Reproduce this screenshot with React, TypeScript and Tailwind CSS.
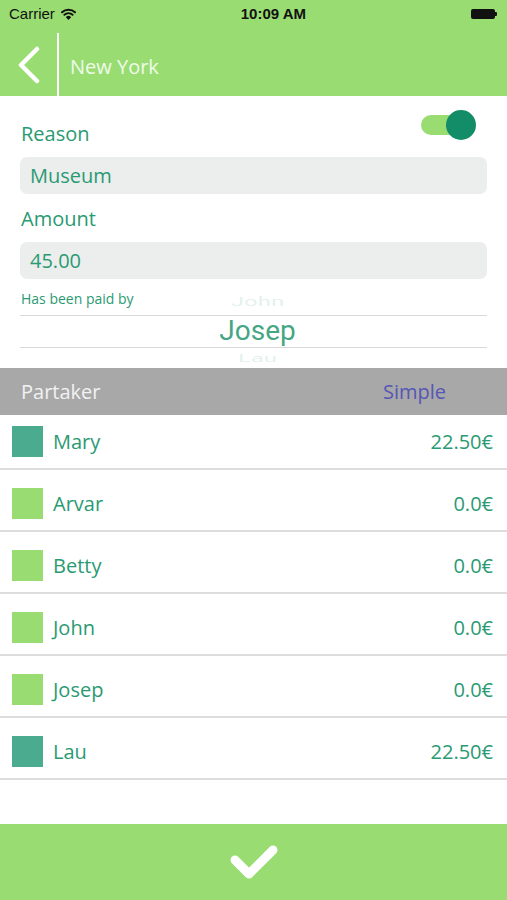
import React from "react";

type Partaker = { name: string; amount: string; active: boolean };

const partakers: Partaker[] = [
  { name: "Mary", amount: "22.50€", active: true },
  { name: "Arvar", amount: "0.0€", active: false },
  { name: "Betty", amount: "0.0€", active: false },
  { name: "John", amount: "0.0€", active: false },
  { name: "Josep", amount: "0.0€", active: false },
  { name: "Lau", amount: "22.50€", active: true },
];

function StatusBar() {
  return (
    <div className="relative flex h-[28px] items-center bg-[#98dc72] px-[9px] font-['Liberation_Sans',sans-serif] text-[#111]">
      <span className="text-[15px]">Carrier</span>
      <svg className="ml-[6px]" width="15" height="12" viewBox="0 0 15 12">
        <path d="M1 4.2a9.5 9.5 0 0 1 13 0" fill="none" stroke="#111" strokeWidth="2" strokeLinecap="round" />
        <path d="M3.4 6.8a6 6 0 0 1 8.2 0" fill="none" stroke="#111" strokeWidth="2" strokeLinecap="round" />
        <path d="M5.6 9.2a3 3 0 0 1 3.8 0L7.5 11.2z" fill="#111" stroke="#111" strokeWidth="1.2" strokeLinejoin="round" />
      </svg>
      <span className="flex-1 text-center text-[15px] font-bold">10:09 AM</span>
      <div className="mr-[1px] flex items-center">
        <div className="h-[10px] w-[24px] rounded-[2px] bg-[#111]" />
        <div className="h-[4px] w-[2px] rounded-r-[1px] bg-[#111]" />
      </div>
    </div>
  );
}

function NavBar() {
  return (
    <div className="flex h-[68px] items-stretch bg-[#98dc72]">
      <div className="flex w-[57px] items-center justify-center pt-[6px]">
        <svg width="26" height="38" viewBox="0 0 26 38">
          <path d="M21 3 L5 19 L21 35" fill="none" stroke="#fff" strokeWidth="4.5" strokeLinecap="round" strokeLinejoin="round" />
        </svg>
      </div>
      <div className="mt-[5px] w-[2px] bg-white" />
      <div className="flex items-center pl-[11px] pt-[9px] text-[20px] text-white/85">New York</div>
    </div>
  );
}

function Toggle() {
  return (
    <div className="relative mr-[11px] mt-[2px] h-[30px] w-[55px]">
      <div className="absolute left-0 top-[5px] h-[20px] w-[42px] rounded-full bg-[#98dc72]" />
      <div className="absolute right-0 top-0 h-[30px] w-[30px] rounded-full bg-[#138c68]" />
    </div>
  );
}

function PaidByPicker() {
  return (
    <div className="relative -mt-[24px] flex h-[83px] flex-col items-center overflow-hidden pt-[4px] font-['Roboto',sans-serif]">
      <div className="absolute left-0 right-0 top-[30px] h-px bg-[#d8d8d8]" />
      <div className="absolute left-0 right-0 top-[62px] h-px bg-[#d8d8d8]" />
      <div className="flex h-[28px] scale-y-[0.5] items-end pb-[2px] pl-[8px] text-[24px] leading-none text-[#2a9a72]/15">John</div>
      <div className="flex h-[28px] items-center pl-[8px] pt-[4px] text-[28px] text-[#2a9a72]/90">Josep</div>
      <div className="flex h-[28px] scale-y-[0.45] items-start pl-[8px] pt-[6px] text-[24px] leading-none text-[#2a9a72]/15">Lau</div>
    </div>
  );
}

function PartakerRow({ p, first }: { p: Partaker; first: boolean }) {
  return (
    <div
      className={`flex items-center border-b-2 border-[#dcdcdc] pl-[12px] pr-[14px] ${
        first ? "h-[55px]" : "h-[62px] pt-[7px]"
      }`}
    >
      <div className={`h-[31px] w-[31px] ${p.active ? "bg-[#4aab8e]" : "bg-[#98dc72]"}`} />
      <span className="ml-[10px] flex-1 text-[20px] text-[#2a9a72]">{p.name}</span>
      <span className="text-[20px] text-[#2a9a72]">{p.amount}</span>
    </div>
  );
}

export default function App() {
  return (
    <div className="flex h-[900px] w-[507px] flex-col overflow-hidden bg-white font-['Open_Sans',sans-serif]">
      <StatusBar />
      <NavBar />

      <div className="flex flex-col px-[20px] pt-[12px]">
        <div className="flex h-[40px] items-start justify-between">
          <span className="mt-[12px] pl-[1px] text-[20px] leading-[28px] text-[#2a9a72]">Reason</span>
          <Toggle />
        </div>
        <div className="mt-[9px] flex h-[37px] items-center rounded-[7px] bg-[#ebeeed] px-[10px] text-[20px] text-[#2a9a72]">
          Museum
        </div>
        <span className="mt-[11px] pl-[1px] text-[20px] leading-[28px] text-[#2a9a72]">Amount</span>
        <div className="mt-[9px] flex h-[37px] items-center rounded-[7px] bg-[#ebeeed] px-[10px] text-[20px] text-[#2a9a72]">
          45.00
        </div>
        <span className="mt-[10px] pl-[1px] text-[14px] leading-[20px] text-[#2a9a72]">Has been paid by</span>
        <PaidByPicker />
      </div>

      <div className="flex h-[47px] items-center justify-between bg-[#a8a8a8] pl-[21px] pr-[61px] text-[20px]">
        <span className="text-[#f2f2f2]">Partaker</span>
        <span className="text-[#5656b6]">Simple</span>
      </div>

      <div className="flex flex-col">
        {partakers.map((p, i) => (
          <PartakerRow key={p.name} p={p} first={i === 0} />
        ))}
      </div>

      <div className="flex-1" />

      <div className="flex h-[76px] items-center justify-center bg-[#98dc72]">
        <svg width="56" height="40" viewBox="0 0 56 40">
          <path d="M9 18 L23 32 L47 8" fill="none" stroke="#fff" strokeWidth="9" strokeLinecap="round" strokeLinejoin="round" />
        </svg>
      </div>
    </div>
  );
}
